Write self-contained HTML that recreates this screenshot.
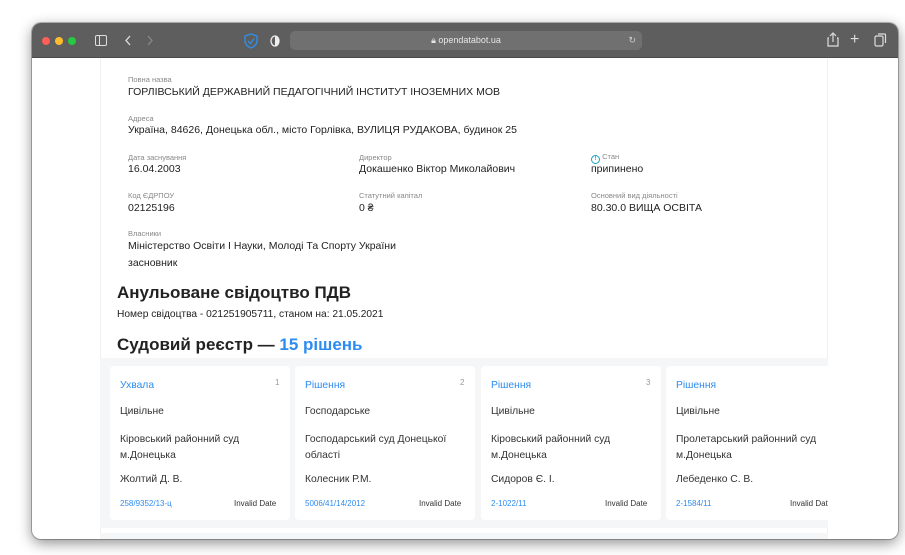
<!DOCTYPE html><html><head><meta charset="utf-8"><style>
*{box-sizing:border-box;margin:0;padding:0}
body{width:905px;height:555px;background:#fff;font-family:"Liberation Sans",sans-serif;position:relative;overflow:hidden;color:#222}
.win{position:absolute;left:32px;top:23px;width:866px;height:516px;border-radius:9px;overflow:hidden;background:#fff;box-shadow:0 4px 14px rgba(0,0,0,.45),0 0 0 1px rgba(0,0,0,.25)}
.bar{height:35px;background:#5e5e5e;position:relative;border-bottom:1px solid #4a4a4a}
.dot{position:absolute;top:14px;width:8px;height:8px;border-radius:50%}
.url{position:absolute;left:258px;top:8px;width:352px;height:19px;background:#707070;border-radius:5px;color:#e6e6e6;font-size:9px;text-align:center;line-height:19px}
.ab{position:absolute;font-size:9px}
.lab{position:absolute;font-size:7.5px;color:#888}
.val{position:absolute;font-size:10.5px;color:#222}
.h{position:absolute;font-size:17px;font-weight:bold;color:#222}
.gray{position:absolute;left:68px;top:335px;width:728px;height:170px;background:#f5f6f8}
.card{position:absolute;top:343px;width:180px;height:154px;background:#fff;border-radius:4px;font-size:10.3px;color:#333}
.card div{position:absolute;left:10px}
.bl{color:#2d8cf0}
</style></head><body>
<div class="win">
<div class="bar">
<div class="dot" style="left:10px;background:#fe5f57"></div><div class="dot" style="left:23px;background:#febc2e"></div><div class="dot" style="left:36px;background:#28c840"></div>
<svg style="position:absolute;left:63px;top:12px" width="12" height="11"><rect x="0.5" y="0.5" width="11" height="10" rx="1.5" fill="none" stroke="#ddd"/><line x1="4.5" y1="0.5" x2="4.5" y2="10.5" stroke="#ddd"/></svg>
<svg style="position:absolute;left:92px;top:12px" width="8" height="11"><path d="M6 1L2 5.5L6 10" fill="none" stroke="#ddd" stroke-width="1.3"/></svg>
<svg style="position:absolute;left:114px;top:12px" width="8" height="11"><path d="M2 1L6 5.5L2 10" fill="none" stroke="#888" stroke-width="1.3"/></svg>
<svg style="position:absolute;left:212px;top:10px" width="14" height="16"><path d="M7 1L13 3V8C13 11 10 14 7 15C4 14 1 11 1 8V3Z" fill="none" stroke="#2f8ee8" stroke-width="1.4"/><path d="M4 8L6.5 10.5L10 5.5" fill="none" stroke="#2f8ee8" stroke-width="1.3"/></svg>
<svg style="position:absolute;left:238px;top:12px" width="10" height="12"><ellipse cx="5" cy="6" rx="4" ry="5" fill="none" stroke="#eee" stroke-width="1.3"/><path d="M5 1A4 5 0 0 1 5 11Z" fill="#eee"/></svg>
<div class="url">🔒︎ opendatabot.ua<span style="position:absolute;right:6px;color:#ccc">↻</span></div>
<svg style="position:absolute;left:795px;top:9px" width="12" height="15"><path d="M2 6H1V14H11V6H10M6 10V1M3 4L6 1L9 4" fill="none" stroke="#ddd" stroke-width="1.2"/></svg>
<div class="ab" style="left:818px;top:8px;font-size:16px;color:#ddd">+</div>
<svg style="position:absolute;left:842px;top:10px" width="13" height="14"><rect x="1" y="3" width="8" height="10" rx="1.5" fill="none" stroke="#ddd" stroke-width="1.2"/><path d="M4 1H10.5A1 1 0 0 1 11.5 2V10" fill="none" stroke="#ddd" stroke-width="1.2"/></svg>
</div>
<div style="position:absolute;left:68px;top:36px;width:728px;height:480px;border-left:1px solid #f0f0f0;border-right:1px solid #f0f0f0"></div>
<div class="lab" style="left:96px;top:52px">Повна назва</div>
<div class="val" style="left:96px;top:63px">ГОРЛІВСЬКИЙ ДЕРЖАВНИЙ ПЕДАГОГІЧНИЙ ІНСТИТУТ ІНОЗЕМНИХ МОВ</div>
<div class="lab" style="left:96px;top:91px">Адреса</div>
<div class="val" style="left:96px;top:101px">Україна, 84626, Донецька обл., місто Горлівка, ВУЛИЦЯ РУДАКОВА, будинок 25</div>
<div class="lab" style="left:96px;top:130px">Дата заснування</div>
<div class="val" style="left:96px;top:140px">16.04.2003</div>
<div class="lab" style="left:327px;top:130px">Директор</div>
<div class="val" style="left:327px;top:140px">Докашенко Віктор Миколайович</div>
<div class="lab" style="left:559px;top:129px"><span style="display:inline-block;width:9px;height:9px;border:1.2px solid #1aa3c8;border-radius:50%;color:#1aa3c8;font-size:6px;text-align:center;line-height:7px;font-weight:bold;vertical-align:-1px">!</span> Стан</div>
<div class="val" style="left:559px;top:140px">припинено</div>
<div class="lab" style="left:96px;top:168px">Код ЄДРПОУ</div>
<div class="val" style="left:96px;top:179px">02125196</div>
<div class="lab" style="left:327px;top:168px">Статутний капітал</div>
<div class="val" style="left:327px;top:179px">0 ₴</div>
<div class="lab" style="left:559px;top:168px">Основний вид діяльності</div>
<div class="val" style="left:559px;top:179px">80.30.0 ВИЩА ОСВІТА</div>
<div class="lab" style="left:96px;top:206px">Власники</div>
<div class="val" style="left:96px;top:217px">Міністерство Освіти І Науки, Молоді Та Спорту України</div>
<div class="val" style="left:96px;top:234px">засновник</div>
<div class="h" style="left:85px;top:260px">Анульоване свідоцтво ПДВ</div>
<div class="val" style="left:85px;top:286px;font-size:10.2px">Номер свідоцтва - 021251905711, станом на: 21.05.2021</div>
<div class="h" style="left:85px;top:312px">Судовий реєстр — <span class="bl">15 рішень</span></div>
<div class="gray"></div>
<div style="position:absolute;left:68px;top:510px;width:728px;height:6px;background:#f5f6f8"></div>
<div class="card" style="left:78px"><div class="bl" style="top:14px">Ухвала</div><div style="left:165px;top:12px;font-size:8px;color:#999">1</div><div style="top:40px">Цивільне</div><div style="top:66px;line-height:16px">Кіровський районний суд<br>м.Донецька</div><div style="top:108px">Жолтий Д. В.</div><div class="bl" style="top:133px;font-size:8px">258/9352/13-ц</div><div style="left:124px;top:133px;font-size:8px">Invalid Date</div></div>
<div class="card" style="left:263px"><div class="bl" style="top:14px">Рішення</div><div style="left:165px;top:12px;font-size:8px;color:#999">2</div><div style="top:40px">Господарське</div><div style="top:66px;line-height:16px">Господарський суд Донецької<br>області</div><div style="top:108px">Колесник Р.М.</div><div class="bl" style="top:133px;font-size:8px">5006/41/14/2012</div><div style="left:124px;top:133px;font-size:8px">Invalid Date</div></div>
<div class="card" style="left:449px"><div class="bl" style="top:14px">Рішення</div><div style="left:165px;top:12px;font-size:8px;color:#999">3</div><div style="top:40px">Цивільне</div><div style="top:66px;line-height:16px">Кіровський районний суд<br>м.Донецька</div><div style="top:108px">Сидоров Є. І.</div><div class="bl" style="top:133px;font-size:8px">2-1022/11</div><div style="left:124px;top:133px;font-size:8px">Invalid Date</div></div>
<div class="card" style="left:634px;width:162px;border-radius:4px 0 0 4px;overflow:hidden"><div class="bl" style="top:14px">Рішення</div><div style="top:40px">Цивільне</div><div style="top:66px;line-height:16px;white-space:nowrap">Пролетарський районний суд<br>м.Донецька</div><div style="top:108px">Лебеденко С. В.</div><div class="bl" style="top:133px;font-size:8px">2-1584/11</div><div style="left:124px;top:133px;font-size:8px;white-space:nowrap">Invalid Date</div></div>
</div>
</body></html>
